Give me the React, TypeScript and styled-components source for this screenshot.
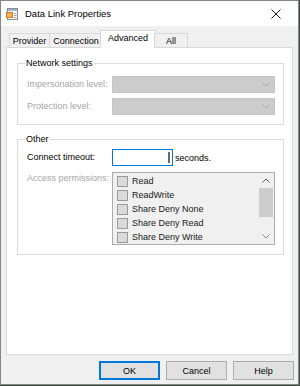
import styled, { createGlobalStyle } from 'styled-components'

const GlobalStyle = createGlobalStyle`
	html, body {
		margin: 0;
		padding: 0;
		background: #3d4b44;
	}

	body {
		font-family: 'Liberation Sans', Arial, sans-serif;
		font-size: 9px;
		color: #000;
	}
`

const permissions = ['Read', 'ReadWrite', 'Share Deny None', 'Share Deny Read', 'Share Deny Write']

const tabs = [
	{ label: 'Provider', width: 41 },
	{ label: 'Connection', width: 54 },
	{ label: 'Advanced', width: 56, active: true },
	{ label: 'All', width: 34 },
]

const Chevron = ({ up, color }: { up?: boolean; color: string }) => (
	<svg width='8' height='5' viewBox='0 0 8 5'>
		<path d={up ? 'M0.5 4.5 L4 1 L7.5 4.5' : 'M0.5 0.5 L4 4 L7.5 0.5'} fill='none' stroke={color} strokeWidth='1' />
	</svg>
)

const AppIcon = () => (
	<svg width='13' height='13' viewBox='0 0 13 13'>
		<rect x='1.5' y='1.5' width='10' height='11' fill='#fff' stroke='#8c8c8c' />
		<rect x='2' y='2' width='9' height='2' fill='#9bb7d6' />
		<rect x='0.5' y='5.5' width='6' height='5' fill='#f3b45a' stroke='#d0781e' />
		<path d='M8 6.5 H10.5 M8 8.5 H10.5 M8 10.5 H10.5' stroke='#a0a0a0' />
	</svg>
)

export default function App() {
	return (
		<>
			<GlobalStyle />
			<Window>
				<TitleBar>
					<AppIcon />
					<Title>Data Link Properties</Title>
					<CloseButton>
						<svg width='10' height='10' viewBox='0 0 10 10'>
							<path d='M0.5 0.5 L9.5 9.5 M9.5 0.5 L0.5 9.5' stroke='#1a1a1a' strokeWidth='1' />
						</svg>
					</CloseButton>
				</TitleBar>
				<Body>
					<TabStrip>
						{tabs.map(tab => (
							<Tab key={tab.label} $width={tab.width} $active={tab.active}>
								{tab.label}
							</Tab>
						))}
					</TabStrip>
					<Panel>
						<Group>
							<Legend>Network settings</Legend>
							<ComboRow>
								<Label $disabled>Impersonation level:</Label>
								<Combo>
									<Chevron color='#aaaaaa' />
								</Combo>
							</ComboRow>
							<ComboRow>
								<Label $disabled>Protection level:</Label>
								<Combo>
									<Chevron color='#aaaaaa' />
								</Combo>
							</ComboRow>
						</Group>
						<Group $gap>
							<Legend>Other</Legend>
							<TimeoutRow>
								<Label>Connect timeout:</Label>
								<TextBox>
									<Caret />
								</TextBox>
								<Unit>seconds.</Unit>
							</TimeoutRow>
							<PermissionsRow>
								<Label $disabled>Access permissions:</Label>
								<ListBox>
									<Items>
										{permissions.map(item => (
											<Item key={item}>
												<Check />
												{item}
											</Item>
										))}
									</Items>
									<ScrollBar>
										<Arrow>
											<Chevron up color='#606060' />
										</Arrow>
										<Track>
											<Thumb />
										</Track>
										<Arrow>
											<Chevron color='#8c8c8c' />
										</Arrow>
									</ScrollBar>
								</ListBox>
							</PermissionsRow>
						</Group>
					</Panel>
					<Buttons>
						<Button $default>OK</Button>
						<Button>Cancel</Button>
						<Button>Help</Button>
					</Buttons>
				</Body>
			</Window>
		</>
	)
}

const Window = styled.div`
	width: 299px;
	height: 385px;
	box-sizing: border-box;
	border: 1px solid #858585;
	background: #f0f0f0;
	display: flex;
	flex-direction: column;
`

const TitleBar = styled.div`
	height: 25px;
	background: #fff;
	display: flex;
	align-items: center;
	padding-left: 5px;
`

const Title = styled.span`
	font-size: 9.5px;
	margin-left: 6px;
	flex: 1;
`

const CloseButton = styled.div`
	width: 45px;
	height: 25px;
	display: flex;
	align-items: center;
	justify-content: center;
`

const Body = styled.div`
	flex: 1;
	display: flex;
	flex-direction: column;
	padding: 5px 0 0 5px;
`

const TabStrip = styled.div`
	display: flex;
	align-items: flex-end;
	height: 17px;
	padding-left: 3px;
	margin-bottom: -1px;
	position: relative;
	z-index: 1;
`

const Tab = styled.div<{ $width: number; $active?: boolean }>`
	width: ${({ $width }) => $width}px;
	height: ${({ $active }) => ($active ? 18 : 15)}px;
	box-sizing: border-box;
	border: 1px solid #d9d9d9;
	border-bottom: ${({ $active }) => ($active ? 'none' : '1px solid #d9d9d9')};
	margin-left: ${({ $active }) => ($active ? -3 : -1)}px;
	margin-right: ${({ $active }) => ($active ? -1 : 0)}px;
	background: ${({ $active }) => ($active ? '#fff' : '#f0f0f0')};
	display: flex;
	align-items: ${({ $active }) => ($active ? 'flex-start' : 'center')};
	justify-content: center;
	padding-top: ${({ $active }) => ($active ? 2 : 0)}px;

	&:first-child {
		margin-left: 0;
	}
`

const Panel = styled.div`
	width: 287px;
	height: 308px;
	box-sizing: border-box;
	border: 1px solid #d9d9d9;
	background: #fff;
	padding: 9px 8px 0 10px;
`

const Group = styled.fieldset<{ $gap?: boolean }>`
	margin: ${({ $gap }) => ($gap ? 8 : 0)}px 0 0;
	padding: 0 8px 9px 9px;
	border: 1px solid #dcdcdc;
	min-width: 0;
`

const Legend = styled.legend`
	padding: 0 1px;
	margin-left: -2px;
	line-height: 13px;
`

const Label = styled.span<{ $disabled?: boolean }>`
	width: 85px;
	flex-shrink: 0;
	color: ${({ $disabled }) => ($disabled ? '#a5a5a5' : '#000')};
	line-height: 13px;
`

const ComboRow = styled.div`
	display: flex;
	align-items: center;
	margin-top: 6px;

	& + & {
		margin-top: 5px;
	}
`

const Combo = styled.div`
	width: 164px;
	height: 17px;
	box-sizing: border-box;
	border: 1px solid #c4c4c4;
	background: #cccccc;
	display: flex;
	align-items: center;
	justify-content: flex-end;
	padding-right: 4px;
`

const TimeoutRow = styled.div`
	display: flex;
	align-items: center;
	margin-top: 3px;
`

const TextBox = styled.div`
	width: 61px;
	height: 17px;
	box-sizing: border-box;
	border: 1px solid #0078d7;
	background: #fff;
	display: flex;
	align-items: center;
	justify-content: flex-end;
	padding-right: 2px;
`

const Caret = styled.div`
	width: 2px;
	height: 11px;
	background: #6a6a6a;
`

const Unit = styled.span`
	margin-left: 2px;
`

const PermissionsRow = styled.div`
	display: flex;
	align-items: flex-start;
	margin-top: 6px;
`

const ListBox = styled.div`
	width: 164px;
	height: 73px;
	box-sizing: border-box;
	border: 1px solid #adadad;
	background: #f0f0f0;
	display: flex;
	overflow: hidden;
`

const Items = styled.div`
	flex: 1;
	padding: 1px 0 0 4px;
`

const Item = styled.div`
	height: 14px;
	display: flex;
	align-items: center;
	color: #1a1a1a;
`

const Check = styled.span`
	width: 11px;
	height: 11px;
	box-sizing: border-box;
	border: 1px solid #9a9a9a;
	background: #dadada;
	margin-right: 4px;
`

const ScrollBar = styled.div`
	width: 17px;
	display: flex;
	flex-direction: column;
`

const Arrow = styled.div`
	height: 15px;
	display: flex;
	align-items: center;
	justify-content: center;
`

const Track = styled.div`
	flex: 1;
	padding: 0 1px 0 2px;
`

const Thumb = styled.div`
	height: 29px;
	background: #cdcdcd;
`

const Buttons = styled.div`
	display: flex;
	justify-content: flex-end;
	gap: 6px;
	margin-top: 6px;
	padding-right: 4px;
`

const Button = styled.div<{ $default?: boolean }>`
	width: 61px;
	height: 19px;
	box-sizing: border-box;
	border: ${({ $default }) => ($default ? '2px solid #0078d7' : '1px solid #adadad')};
	background: #e1e1e1;
	display: flex;
	align-items: center;
	justify-content: center;
`
